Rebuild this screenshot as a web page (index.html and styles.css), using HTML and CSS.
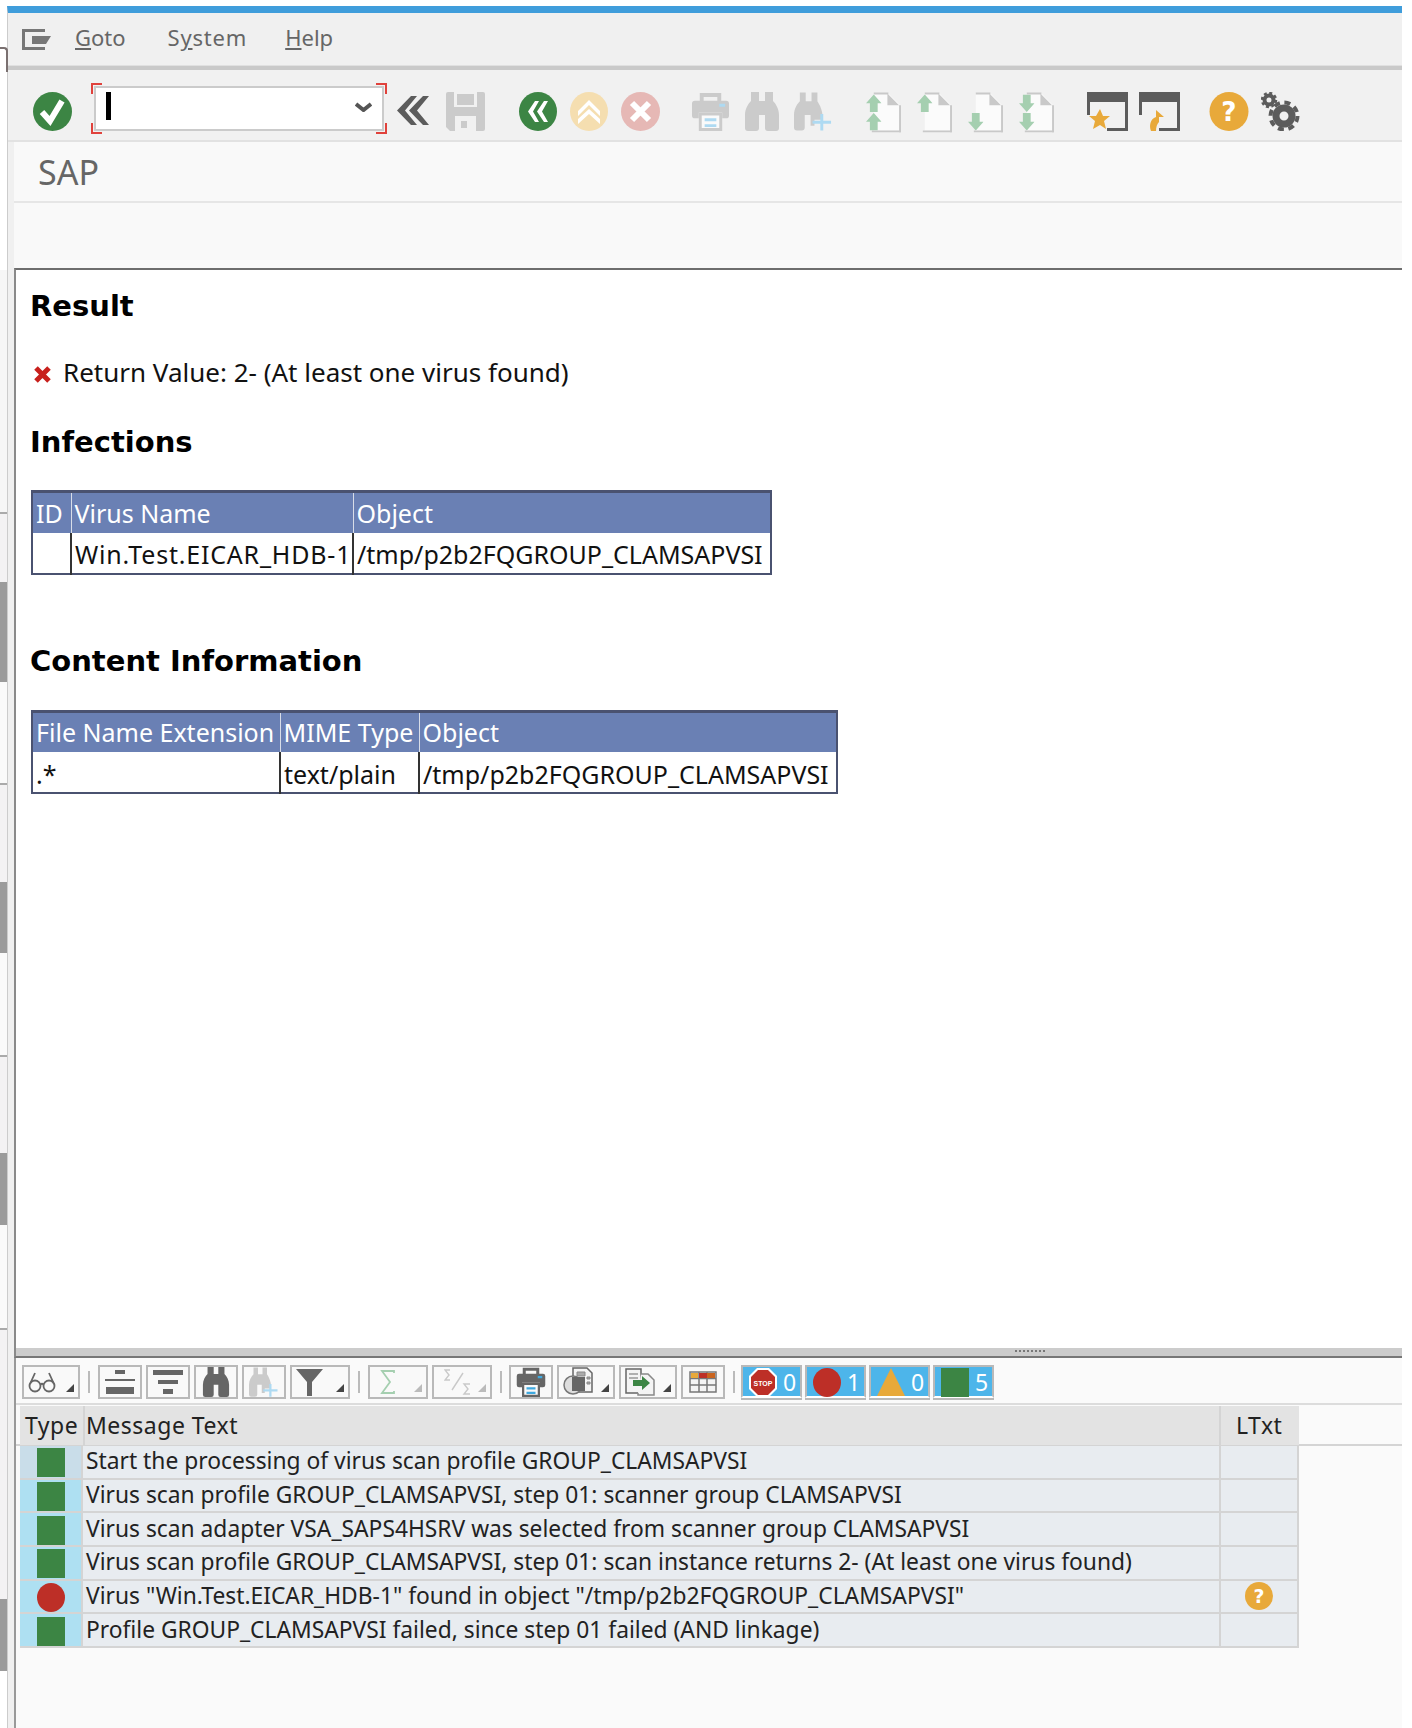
FILE: index.html
```html
<!DOCTYPE html>
<html>
<head>
<meta charset="utf-8">
<title>SAP</title>
<link rel="stylesheet" href="styles.css">
</head>
<body>
<svg class="defs" width="0" height="0">
	<symbol id="print" viewBox="0 0 40 40">
		<path fill="currentColor" d="M9 1h22v9h-4V5H13v5H9z"/>
		<path fill="currentColor" d="M4 9h32a3 3 0 0 1 3 3v12a3 3 0 0 1-3 3h-4v-6H8v6H4a3 3 0 0 1-3-3V12a3 3 0 0 1 3-3z"/>
		<path fill="#fafafa" stroke="currentColor" stroke-width="3" d="M9.500 22.500h21v16h-21z"/>
		<path fill="var(--acc)" d="M29 12h6v3h-6zM14 27h12v3H14zM14 33h12v3H14z"/>
	</symbol>
	<symbol id="binoc" viewBox="0 0 36 39">
		<path fill="currentColor" d="M7 0h8v9h6V0h8v9c3 3 6 8 6 14v13a3 3 0 0 1-3 3H24a3 3 0 0 1-3-3V23h-6v13a3 3 0 0 1-3 3H4a3 3 0 0 1-3-3V23c0-6 3-11 6-14z"/>
	</symbol>
	<symbol id="binocplus" viewBox="0 0 40 39">
		<path fill="currentColor" d="M6 0h6v9h6V0h6v9c2 3 4 7 5 12v7h-8v6h-4V23h-6v13a3 3 0 0 1-3 3H3a3 3 0 0 1-3-3V23c0-6 3-11 6-14z"/>
		<path fill="var(--acc)" d="M27 22h3v7h8v3h-8v7h-3v-7h-8v-3h8z"/>
	</symbol>
	<symbol id="page" viewBox="0 0 36 42">
		<path fill="#fbfbfb" d="M8 2h15l11 11v27H8z"/>
		<path fill="#c9c9c9" d="M8 1h15v2H8zM22 2l12 12H22zM6 40h30v2H6z"/>
		<path fill="#c9c9c9" d="M34 14h2v28h-2z"/>
	</symbol>
	<symbol id="arrowup" viewBox="0 0 16 18">
		<path fill="#a5cfb0" d="M8 0l8 9h-4v9H4V9H0z"/>
	</symbol>
	<symbol id="arrowdown" viewBox="0 0 16 18">
		<path fill="#a5cfb0" d="M8 18l8-9h-4V0H4v9H0z"/>
	</symbol>
	<symbol id="win" viewBox="0 0 41 39">
		<path fill="#5c5c5c" d="M0 0h41v39H20v-3h18V10H3v13H0z"/>
	</symbol>
	<symbol id="sq" viewBox="0 0 28 29">
		<rect width="28" height="29" fill="#3c8544"/>
	</symbol>
	<symbol id="dot" viewBox="0 0 28 29">
		<ellipse cx="14" cy="14.500" rx="14" ry="14.500" fill="#bd2f27"/>
	</symbol>
</svg>

<div class="gutter"></div>
<div class="window">
	<div class="menubar">
		<svg class="menuicon" width="29" height="21" viewBox="0 0 29 21"><path fill="none" stroke="#777" stroke-width="3" d="M23 1.500H1.500v18H23"/><path fill="#777" d="M10 7h19l-5 8H10z"/></svg>
		<span><u>G</u>oto</span>
		<span class="menu-sys">S<u>y</u>stem</span>
		<span class="menu-help"><u>H</u>elp</span>
	</div>

	<div class="toolbar">
		<svg width="39" height="39" viewBox="0 0 39 39"><circle cx="19.500" cy="19.500" r="19.500" fill="#3c8544"/><path fill="none" stroke="#fff" stroke-width="6" d="M9 20l8 9L29 9"/></svg>
		<div class="cmd-group">
			<div class="cmd-frame">
				<i class="corner tl"></i><i class="corner tr"></i><i class="corner bl"></i><i class="corner br"></i>
				<div class="cmd-input">
					<span class="caret"></span>
					<svg width="17" height="10" viewBox="0 0 17 10"><path fill="none" stroke="#555" stroke-width="4" d="M1 2l7.500 6L16 2"/></svg>
				</div>
			</div>
			<svg class="back-chev" width="32" height="29" viewBox="0 0 32 29"><path fill="#5c5c5c" d="M14 0h6L8 14.500 20 29h-6L0 14.500zM26 0h6L20 14.500 32 29h-6L12 14.500z"/></svg>
			<svg class="save" width="39" height="39" viewBox="0 0 39 39"><path fill="#cbcbcb" d="M2 0h35a2 2 0 0 1 2 2v35a2 2 0 0 1-2 2H4l-4-4V2a2 2 0 0 1 2-2z"/><path fill="#f1f1f1" d="M8 0h23v15H8zM9 24h21v15H9z"/><path fill="#cbcbcb" d="M11 2h17v11H11zM15 29h6v7h-6z"/></svg>
		</div>
		<div class="tb-group tb-13">
			<svg width="38" height="39" viewBox="0 0 38 39"><ellipse cx="19" cy="19.500" rx="19" ry="19.500" fill="#3c8544"/><path fill="#fff" d="M16 9h4l-6 10.500L20 30h-4L9 19.500zM25 9h4l-6 10.500L29 30h-4l-7-10.500z"/></svg>
			<svg width="38" height="39" viewBox="0 0 38 39"><ellipse cx="19" cy="19.500" rx="19" ry="19.500" fill="#f5deb0"/><path fill="#fff" d="M19 8l11 11v5L19 13 8 24v-5zM19 17l11 10v5L19 22 8 32v-5z"/></svg>
			<svg width="39" height="39" viewBox="0 0 39 39"><ellipse cx="19.500" cy="19.500" rx="19.500" ry="19.500" fill="#e6b8b5"/><path fill="none" stroke="#fff" stroke-width="6" d="M11 11l17 17M28 11L11 28"/></svg>
		</div>
		<div class="tb-group tb-14 dis tb-print">
			<svg width="39" height="39"><use href="#print"/></svg>
			<svg width="36" height="39"><use href="#binoc"/></svg>
			<svg width="39" height="39"><use href="#binocplus"/></svg>
		</div>
		<div class="tb-group tb-16">
			<svg width="35" height="42" viewBox="0 0 36 42"><use href="#page" width="36" height="42"/><use href="#arrowup" x="0" y="3" width="16" height="18"/><use href="#arrowup" x="0" y="22" width="16" height="18"/></svg>
			<svg width="35" height="42" viewBox="0 0 36 42"><use href="#page" width="36" height="42"/><use href="#arrowup" x="0" y="3" width="16" height="18"/></svg>
			<svg width="35" height="42" viewBox="0 0 36 42"><use href="#page" width="36" height="42"/><use href="#arrowdown" x="0" y="22" width="16" height="18"/></svg>
			<svg width="35" height="42" viewBox="0 0 36 42"><use href="#page" width="36" height="42"/><use href="#arrowdown" x="0" y="3" width="16" height="18"/><use href="#arrowdown" x="0" y="22" width="16" height="18"/></svg>
		</div>
		<div class="tb-group tb-11">
			<svg width="41" height="39" viewBox="0 0 41 39"><use href="#win" width="41" height="39"/><path fill="#e8a93a" d="M13 17l3 7h7l-6 5 2 8-6-4-7 4 2-8-6-5h7z"/></svg>
			<svg width="41" height="39" viewBox="0 0 41 39"><use href="#win" width="41" height="39"/><path fill="#e8a93a" d="M17 18l8 7h-5v5c-2 2-3 5-3 9h-5c-2-5-1-12 5-14z"/></svg>
		</div>
		<div class="tb-group tb-12">
			<svg width="40" height="39" viewBox="0 0 40 40"><circle cx="20" cy="20" r="20" fill="#e8a93a"/><text x="20" y="30" text-anchor="middle" class="qmark">?</text></svg>
			<svg width="39" height="39" viewBox="0 0 39 39"><circle cx="8" cy="8" r="4.500" fill="none" stroke="#5c5c5c" stroke-width="4"/><circle cx="8" cy="8" r="7" fill="none" stroke="#5c5c5c" stroke-width="2.500" stroke-dasharray="3 2.500"/><circle cx="23" cy="24" r="8" fill="none" stroke="#5c5c5c" stroke-width="7"/><circle cx="23" cy="24" r="13.500" fill="none" stroke="#5c5c5c" stroke-width="4" stroke-dasharray="6 4.600"/></svg>
		</div>
	</div>

	<div class="titlebar">SAP</div>
	<div class="appbar"></div>

	<div class="content">
		<h2 class="h-result">Result</h2>
		<p class="retval">
			<svg width="19" height="17" viewBox="0 0 19 17"><path fill="none" stroke="#c8201c" stroke-width="5" d="M3 2l13 13M16 2L3 15"/></svg>
			Return Value: 2- (At least one virus found)
		</p>
		<h2 class="h-infect">Infections</h2>
		<table class="grid grid-infect">
			<colgroup><col class="c39"><col class="c282"><col></colgroup>
			<tr><th>ID</th><th>Virus Name</th><th>Object</th></tr>
			<tr><td></td><td class="virus">Win.Test.EICAR_HDB-1</td><td>/tmp/p2b2FQGROUP_CLAMSAPVSI</td></tr>
		</table>
		<h2 class="h-content">Content Information</h2>
		<table class="grid grid-content">
			<colgroup><col class="c248"><col class="c139"><col></colgroup>
			<tr><th>File Name Extension</th><th>MIME Type</th><th>Object</th></tr>
			<tr><td>.*</td><td>text/plain</td><td>/tmp/p2b2FQGROUP_CLAMSAPVSI</td></tr>
		</table>
	</div>

	<div class="splitter"><i class="grip"></i></div>

	<div class="lower">
		<div class="alvbar">
			<button class="btn drop-sm"><svg width="28" height="22" viewBox="0 0 28 22"><g fill="none" stroke="#666" stroke-width="1.800"><circle cx="7" cy="15" r="5.500"/><circle cx="21" cy="15" r="5.500"/><path d="M12.500 13.500q1.500-1.500 3 0M2 13L7 2M26 13L21 2"/></g></svg></button>
			<i class="sep"></i>
			<button class="btn"><svg width="30" height="24" viewBox="0 0 30 24"><path fill="#666" d="M10 0h10v4H10zM0 9h30v2H0zM1 17h28v7H1z"/></svg></button>
			<button class="btn"><svg width="30" height="24" viewBox="0 0 30 24"><path fill="#666" d="M0 0h30v5H0zM5 10h20v4H5zM10 19h10v5H10z"/></svg></button>
			<button class="btn dark"><svg width="28" height="30"><use href="#binoc"/></svg></button>
			<button class="btn dis"><svg width="30" height="30"><use href="#binocplus"/></svg></button>
			<button class="btn drop"><svg width="27" height="27" viewBox="0 0 27 27"><path fill="#666" d="M0 0h27L16 13v14h-5V13z"/></svg></button>
			<i class="sep"></i>
			<button class="btn drop off"><svg width="16" height="24" viewBox="0 0 16 24"><path fill="none" stroke="#a5cfb0" stroke-width="1.800" d="M14 3V1H2l8 11-8 11h12v-2"/></svg></button>
			<button class="btn drop off"><svg width="30" height="28" viewBox="0 0 30 28"><path fill="none" stroke="#c9c9c9" stroke-width="1.400" d="M6 2H1l4 5-4 5h5M8 22L19 5M26 16h-6l4 5-4 5h6"/></svg></button>
			<i class="sep sep-tight"></i>
			<button class="btn"><svg width="30" height="30"><use href="#print"/></svg></button>
			<button class="btn drop-sm"><svg width="30" height="30" viewBox="0 0 30 30"><path fill="#f4f4f4" stroke="#666" stroke-width="1.500" d="M10 1h14l5 5v19H10z"/><path fill="#aaa" stroke="#888" d="M14 5h8v4h-8zM24 10h3v2h-3zM24 15h3v2h-3z"/><circle cx="10" cy="18" r="9" fill="#ddd" stroke="#777" stroke-width="1.500"/><rect x="9" y="10" width="13" height="14" fill="#666"/></svg></button>
			<button class="btn drop-sm"><svg width="30" height="28" viewBox="0 0 30 28"><path fill="#f4f4f4" stroke="#666" stroke-width="1.500" d="M1 1h15v24H1z"/><path fill="#f4f4f4" stroke="#888" stroke-width="1.500" d="M16 6h7l6 6v15H13v-2"/><path stroke="#999" stroke-width="1.500" d="M4 6h9M4 10h9"/><path fill="#3c8544" d="M8 12h9V8l8 7-8 7v-4H8z"/></svg></button>
			<button class="btn"><svg width="28" height="22" viewBox="0 0 28 22"><path fill="#f4f4f4" stroke="#777" stroke-width="1.500" d="M1 1h26v20H1zM1 7.500h26M1 14h26M10 1v20M18 1v20"/><path fill="#e8a93a" d="M2 2h7v5H2z"/><path fill="#bd2f27" d="M10 2h8v5h-8z"/><path fill="#c9641e" d="M18 2h8v5h-8z"/></svg></button>
			<i class="sep sep-status"></i>
			<div class="status-group">
				<button class="btn status"><svg width="28" height="29" viewBox="0 0 28 29"><path fill="#fff" d="M8 0h12l8 8v13l-8 8H8l-8-8V8z"/><path fill="#bd2f27" d="M9 2h10l7 7v11l-7 7H9l-7-7V9z"/><text x="14" y="17.500" text-anchor="middle" class="stop">STOP</text></svg><span>0</span></button>
				<button class="btn status"><svg width="28" height="29"><use href="#dot"/></svg><span>1</span></button>
				<button class="btn status"><svg width="28" height="28" viewBox="0 0 28 28"><path fill="#e8a93a" d="M14 0l14 28H0z"/></svg><span>0</span></button>
				<button class="btn status"><svg width="28" height="29"><use href="#sq"/></svg><span>5</span></button>
			</div>
		</div>

		<div class="alv-head">
			<div class="alv-cols">
				<div class="hc hc-type">Type</div>
				<div class="hc hc-msg">Message Text</div>
				<div class="hc hc-ltxt">LTxt</div>
			</div>
		</div>

		<div class="alv-rows">
			<div class="ty ty-sel"><svg width="28" height="29"><use href="#sq"/></svg></div>
			<div class="msg">Start the processing of virus scan profile GROUP_CLAMSAPVSI</div>
			<div class="lt"></div>
			<div class="ty"><svg width="28" height="29"><use href="#sq"/></svg></div>
			<div class="msg">Virus scan profile GROUP_CLAMSAPVSI, step 01: scanner group CLAMSAPVSI</div>
			<div class="lt"></div>
			<div class="ty"><svg width="28" height="29"><use href="#sq"/></svg></div>
			<div class="msg">Virus scan adapter VSA_SAPS4HSRV was selected from scanner group CLAMSAPVSI</div>
			<div class="lt"></div>
			<div class="ty"><svg width="28" height="29"><use href="#sq"/></svg></div>
			<div class="msg">Virus scan profile GROUP_CLAMSAPVSI, step 01: scan instance returns 2- (At least one virus found)</div>
			<div class="lt"></div>
			<div class="ty"><svg width="28" height="29"><use href="#dot"/></svg></div>
			<div class="msg">Virus "Win.Test.EICAR_HDB-1" found in object "/tmp/p2b2FQGROUP_CLAMSAPVSI"</div>
			<div class="lt"><svg width="28" height="28" viewBox="0 0 40 40"><circle cx="20" cy="20" r="20" fill="#e8a93a"/><text x="20" y="30" text-anchor="middle" class="qmark">?</text></svg></div>
			<div class="ty"><svg width="28" height="29"><use href="#sq"/></svg></div>
			<div class="msg">Profile GROUP_CLAMSAPVSI failed, since step 01 failed (AND linkage)</div>
			<div class="lt"></div>
		</div>
	</div>
</div>
</body>
</html>
```

FILE: styles.css
```css
* {
	box-sizing: border-box;
}
html, body {
	margin: 0;
	height: 1728px;
	overflow: hidden;
}
body {
	display: flex;
	width: 1402px;
	background-color: #fff;
	font-family: "Noto Sans", sans-serif;
	color: #222;
}
.defs {
	position: absolute;
}
.qmark {
	font-family: "DejaVu Sans", sans-serif;
	font-weight: bold;
	font-size: 27px;
	fill: #fff;
}
.stop {
	font-family: "Liberation Sans", sans-serif;
	font-weight: bold;
	font-size: 7px;
	fill: #fff;
}

/* bits of the window behind, showing down the left edge */
.gutter {
	position: relative;
	width: 7px;
	flex: none;
	background-image: linear-gradient(to bottom,
		#fff 0 270px, #f6f6f6 270px 512px, #aaa 512px 514px, #f3f2f3 514px 582px,
		#9b9b9b 582px 682px, #fafafa 682px 783px, #aaa 783px 785px, #f3f2f3 785px 882px,
		#9b9b9b 882px 953px, #fafafa 953px 1055px, #aaa 1055px 1057px, #f3f2f3 1057px 1153px,
		#9b9b9b 1153px 1225px, #fafafa 1225px 1328px, #aaa 1328px 1330px, #f3f2f3 1330px 1599px,
		#9b9b9b 1599px 1671px, #fff 1671px);
}
.gutter::before {
	content: "";
	position: absolute;
	top: 47px;
	left: 0;
	width: 6px;
	height: 23px;
	border-top: 2px solid #7a7070;
	border-right: 2px solid #7a7070;
	border-top-right-radius: 4px;
}

.window {
	flex: 1;
	min-width: 0;
	margin-top: 6px;
	border-top: 7px solid #3f9ddb;
	border-left: 1px solid #ccc;
	background-color: #f0f0f0;
	display: flex;
	flex-direction: column;
}

.menubar {
	height: 53px;
	display: flex;
	align-items: center;
	gap: 42px;
	padding: 0 0 4px 14px;
	font-size: 22px;
	color: #666;
	border-bottom: 1px solid #e0e0e0;
	flex: none;
}
.menuicon {
	margin: 4px -18px 0 0;
}
.menu-sys {
	letter-spacing: 0.8px;
}
.menu-help {
	margin-left: -4px;
}

.toolbar {
	height: 76px;
	padding: 22px 0 0 25px;
	display: flex;
	align-items: flex-start;
	flex: none;
	border-top: 4px solid #c9c9c9;
	border-bottom: 2px solid #e2e2e2;
	background-color: #f1f1f1;
}
.toolbar > * {
	flex: none;
}
.cmd-group {
	display: flex;
	align-items: flex-start;
	margin-left: 19px;
	margin-right: 34px;
}
.cmd-frame {
	position: relative;
	width: 296px;
	height: 51px;
	padding: 3px;
	margin-top: -9px;
}
.corner {
	position: absolute;
	width: 11px;
	height: 11px;
	border: 0 solid #e0423c;
}
.tl { top: 0; left: 0; border-width: 2px 0 0 2px; }
.tr { top: 0; right: 0; border-width: 2px 2px 0 0; }
.bl { bottom: 0; left: 0; border-width: 0 0 2px 2px; }
.br { bottom: 0; right: 0; border-width: 0 2px 2px 0; }
.cmd-input {
	height: 45px;
	background-color: #fff;
	border: 2px solid #cbcbcb;
	display: flex;
	align-items: center;
	justify-content: space-between;
	padding: 0 10px 0 10px;
}
.caret {
	width: 5px;
	height: 28px;
	margin-top: -6px;
	background-color: #000;
}
.cmd-input svg {
	margin-top: -4px;
}
.back-chev {
	margin: 4px 0 0 10px;
}
.save {
	margin-left: 17px;
}
.tb-group {
	display: flex;
	align-items: flex-start;
	margin-right: 33px;
}
.tb-11 { gap: 11px; margin-right: 29px; }
.tb-12 { gap: 12px; }
.tb-13 { gap: 13px; margin-right: 31px; }
.tb-14 { gap: 14px; }
.tb-16 { gap: 16px; margin-top: -1px; }
.dis {
	color: #cbcbcb;
	--acc: #aedaf2;
}

.titlebar {
	height: 61px;
	margin-left: 6px;
	padding: 8px 0 0 24px;
	background-color: #f9f9f9;
	border-bottom: 2px solid #e6e6e6;
	font-size: 34px;
	line-height: 44px;
	color: #666;
	flex: none;
}
.appbar {
	height: 65px;
	margin-left: 6px;
	background-color: #f9f9f9;
	flex: none;
}

.content {
	height: 1080px;
	margin-left: 6px;
	padding: 0 0 0 15px;
	border-top: 2px solid #6e6e6e;
	border-left: 2px solid #8a8a8a;
	background-color: #fff;
	color: #111;
	flex: none;
}
h2 {
	margin: 0 0 0 -1px;
	font-family: "DejaVu Sans", sans-serif;
	font-size: 29px;
	line-height: 36px;
	color: #000;
}
.h-result { padding-top: 18px; height: 54px; box-sizing: content-box; }
.h-infect { margin-top: 34px; }
.h-content { margin-top: 68px; }
.retval {
	margin: 12px 0 0;
	font-size: 26px;
	line-height: 36px;
	display: flex;
	align-items: center;
	gap: 11px;
	padding-left: 2px;
}
.retval svg {
	margin-top: 4px;
}
.grid {
	border-collapse: collapse;
	table-layout: fixed;
	font-size: 25px;
	margin-top: 30px;
	border: 2px solid #4a5270;
	border-top-width: 3px;
}
.grid-infect { width: 741px; }
.grid-content { width: 807px; }
.c39 { width: 39px; }
.c282 { width: 282px; }
.c248 { width: 248px; }
.c139 { width: 139px; }
.grid th, .grid td {
	padding: 0 3px;
	height: 41px;
	text-align: left;
	font-weight: normal;
	white-space: nowrap;
	overflow: hidden;
}
.grid th {
	background-color: #6a80b4;
	color: #fff;
	border-left: 1px solid #d8dde8;
}
.grid td {
	padding-top: 3px;
	border-left: 2px solid #333;
	background-color: #fff;
	color: #111;
}
.grid td.virus {
	letter-spacing: 0.8px;
}
.grid tr > :first-child {
	border-left: 0;
}
.grid-content {
	margin-top: 31px;
}

.splitter {
	height: 10px;
	margin-left: 6px;
	background-color: #ccc;
	border-left: 2px solid #8a8a8a;
	border-bottom: 2px solid #777;
	flex: none;
}
.grip {
	display: block;
	width: 30px;
	height: 2px;
	margin: 2px 0 0 999px;
	border-top: 2px dotted #777;
}

.lower {
	flex: 1;
	margin-left: 6px;
	background-color: #fafafa;
	border-left: 2px solid #999;
	min-height: 0;
}
.alvbar {
	height: 47px;
	padding: 7px 0 0 6px;
	display: flex;
	align-items: flex-start;
	gap: 4px;
	color: #666;
	--acc: #3fa9e0;
	border-bottom: 2px solid #dcdcdc;
}
.btn {
	position: relative;
	width: 44px;
	height: 34px;
	padding: 0;
	background-color: #f9f9f9;
	border: 2px solid #b9b9b9;
	color: #666;
	display: flex;
	align-items: center;
	justify-content: center;
	flex: none;
}
.btn.dis {
	color: #cbcbcb;
}
.btn.drop, .btn.drop-sm {
	width: 60px;
	justify-content: flex-start;
	padding-left: 4px;
}
.btn.drop-sm {
	width: 58px;
}
.btn.drop::after, .btn.drop-sm::after {
	content: "";
	position: absolute;
	right: 4px;
	bottom: 5px;
	width: 0;
	height: 0;
	border-style: solid;
	border-width: 0 0 8px 8px;
	border-color: transparent transparent #444 transparent;
}
.btn.off::after {
	border-color: transparent transparent #bbb transparent;
}
.btn.off {
	padding-left: 10px;
}
.sep {
	width: 2px;
	height: 22px;
	margin: 6px 4px 0 4px;
	background-color: #bbb;
	flex: none;
}
.sep-tight {
	margin-right: 3px;
}
.sep-status {
	margin-right: 2px;
}
.status-group {
	display: flex;
	gap: 3px;
}
.btn.status {
	width: 61px;
	background-color: #4db5ea;
	border-bottom: 2px solid #fff;
	box-shadow: 0 2px 0 #b9b9b9;
	height: 33px;
	gap: 6px;
	justify-content: flex-start;
	padding-left: 6px;
	color: #fff;
	font-family: "Noto Sans", sans-serif;
	font-size: 23px;
}
.btn.status svg {
	margin-top: 1px;
}

.alv-head {
	height: 40px;
	padding-left: 4px;
	border-bottom: 2px solid #d4d4d4;
}
.alv-cols {
	display: grid;
	grid-template-columns: 63px 1136px 80px;
	height: 39px;
	margin-top: 1px;
}
.hc {
	background-color: #e3e3e3;
	font-size: 23px;
	line-height: 38px;
	padding-left: 6px;
	letter-spacing: 0.5px;
	border-left: 2px solid #d4d4d4;
	color: #222;
}
.hc-type {
	padding-left: 5px;
	border-left: 0;
}
.hc-msg {
	padding-left: 1px;
}
.hc-ltxt {
	padding-left: 15px;
}
.alv-rows {
	display: grid;
	grid-template-columns: 63px 1136px 80px;
	grid-auto-rows: 33.67px;
	margin-left: 4px;
	width: 1279px;
}
.ty, .msg, .lt {
	background-color: #e8ecf0;
	border-bottom: 2px solid #d4d4d4;
	display: flex;
	align-items: center;
}
.ty {
	background-color: #aee0f2;
	padding: 2px 0 0 17px;
	border-right: 2px solid #d4d4d4;
}
.ty-sel {
	background-color: #c9dde9;
}
.msg {
	padding: 0 0 2px 3px;
	font-size: 22.8px;
	white-space: nowrap;
	color: #222;
}
.lt {
	border-left: 2px solid #d4d4d4;
	border-right: 2px solid #d4d4d4;
	justify-content: center;
}
```
